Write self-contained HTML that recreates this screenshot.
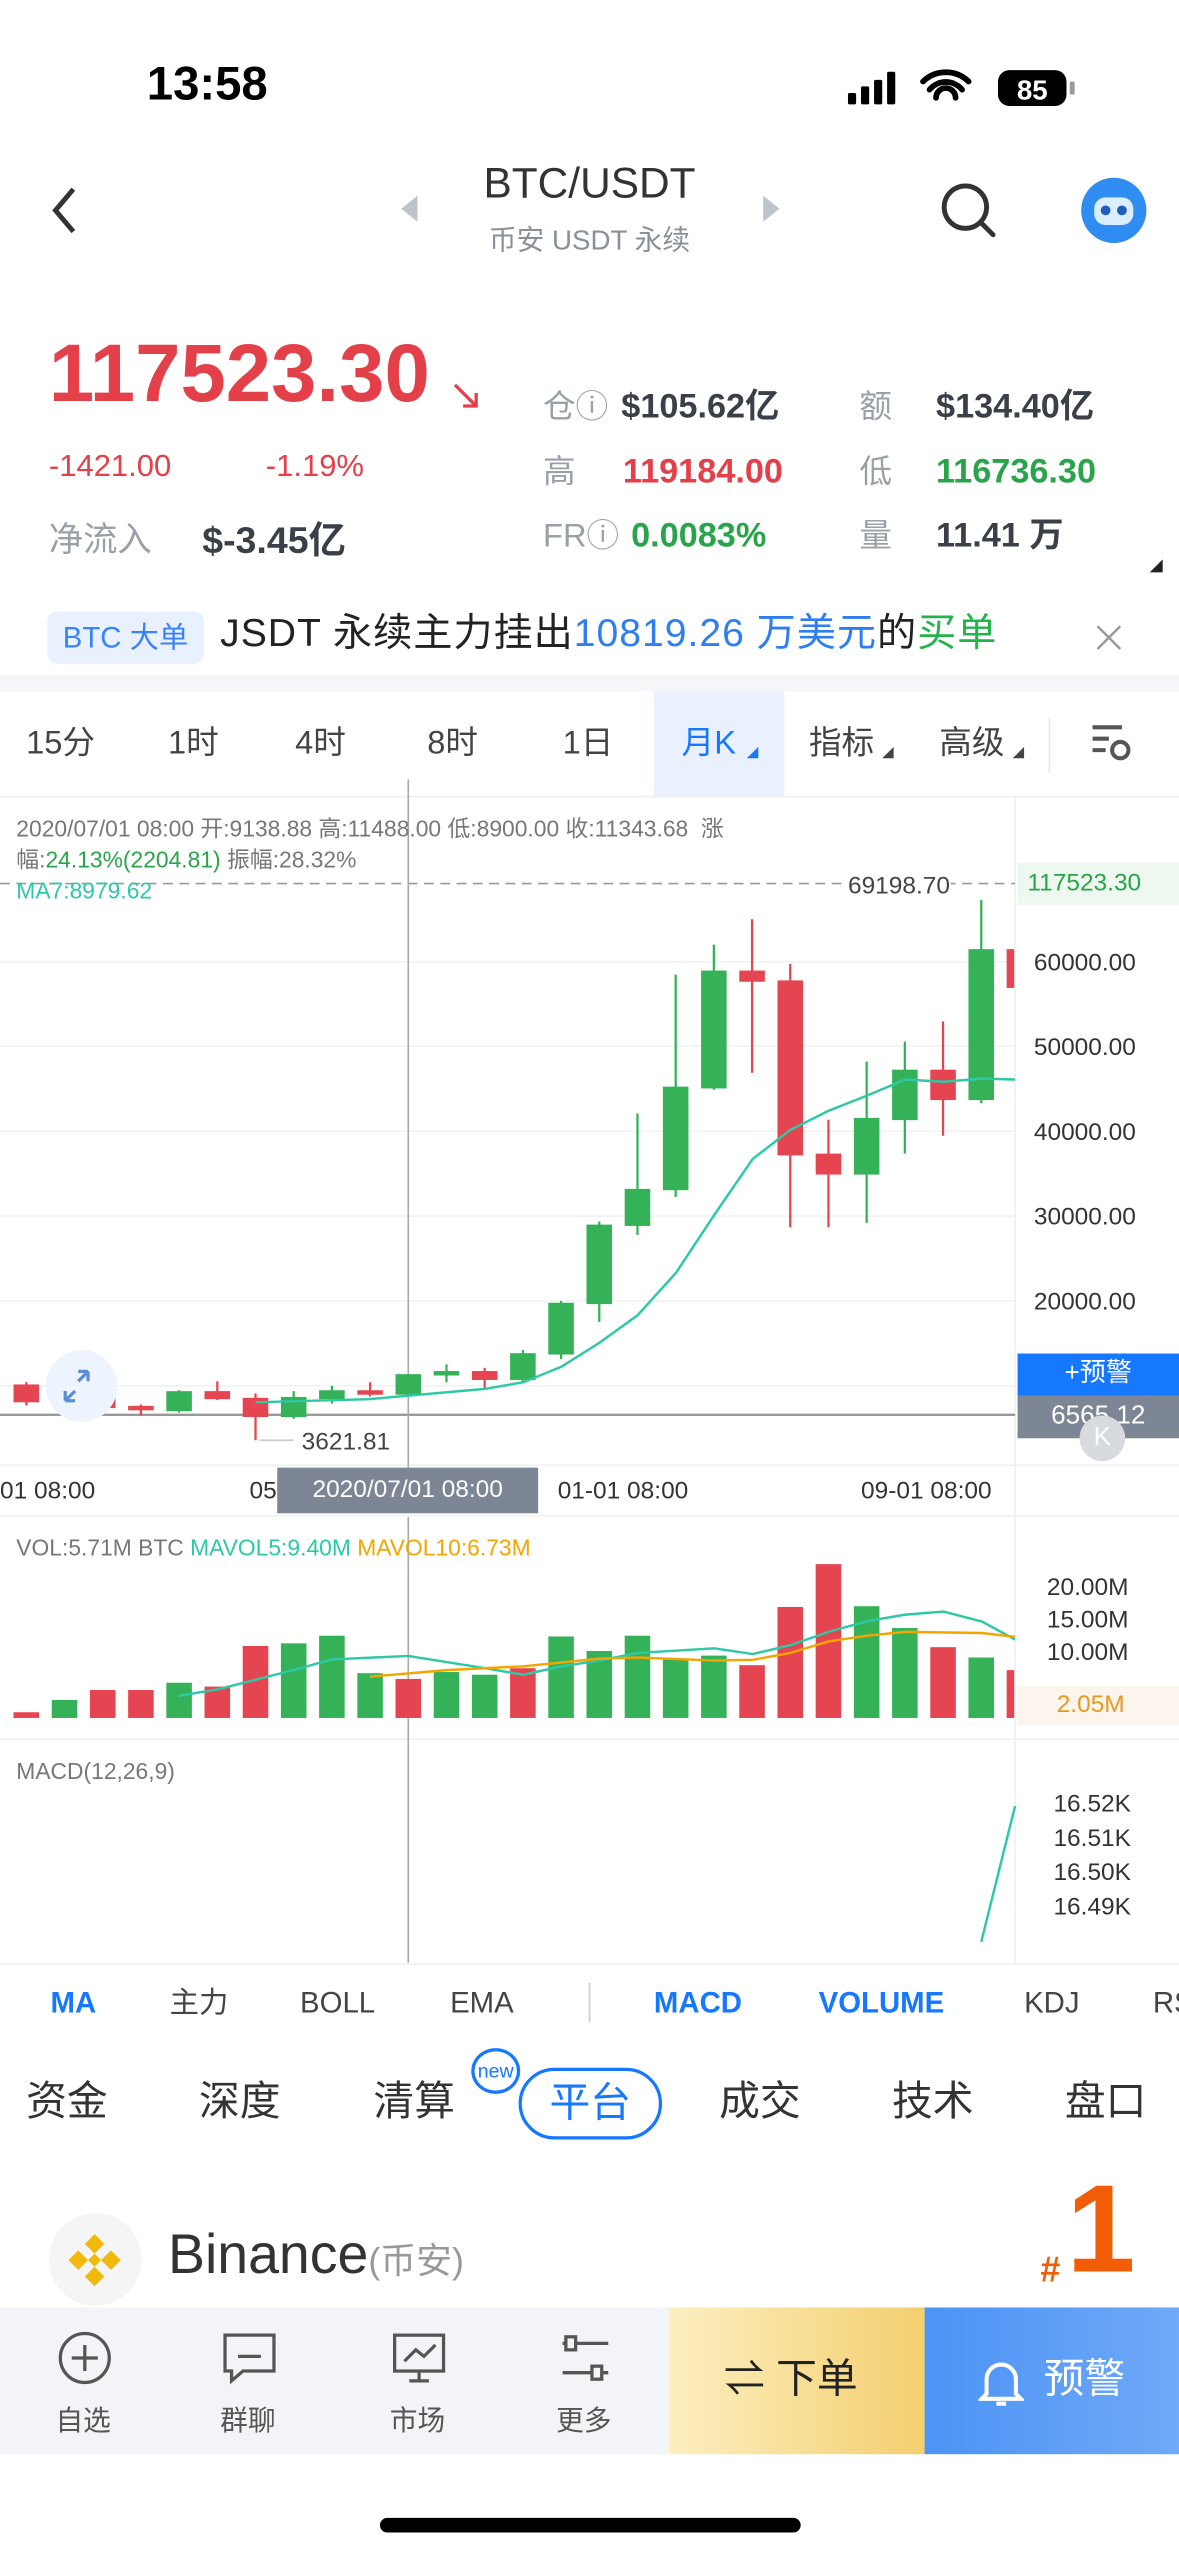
<!DOCTYPE html>
<html><head><meta charset="utf-8"><style>
*{margin:0;padding:0;box-sizing:border-box}
html,body{width:1179px;height:2556px;overflow:hidden;background:#fff}
#w{position:absolute;left:0;top:0;width:723px;height:1568px;transform:scale(1.63071);transform-origin:0 0;font-family:"Liberation Sans","Noto Sans CJK SC",sans-serif;color:#222}
.a{position:absolute;white-space:nowrap;line-height:1}
.g{color:#9aa0a8}.r{color:#e4404a}.gr{color:#2aa44a}.b{color:#1677ff}
.ax{position:absolute;left:634px;font-size:15px;color:#333;line-height:1}
</style></head><body><div id="w">
<!-- status -->
<div class="a" style="left:90px;top:38px;font-size:29px;font-weight:bold;color:#000">13:58</div>
<svg class="a" style="left:518px;top:42px" width="150" height="26" viewBox="0 0 150 26">
<rect x="2" y="15" width="5" height="7" rx="1" fill="#000"/><rect x="10" y="11" width="5" height="11" rx="1" fill="#000"/><rect x="18" y="7" width="5" height="15" rx="1" fill="#000"/><rect x="26" y="2" width="5" height="20" rx="1" fill="#000"/>
<path d="M48 8a20 20 0 0 1 28 0M52 13a13 13 0 0 1 20 0M56 18a6 6 0 0 1 12 0" stroke="#000" stroke-width="3.5" fill="none" stroke-linecap="round"/>
<rect x="94" y="1" width="42" height="22" rx="7" fill="#000"/><rect x="138" y="8" width="3" height="8" rx="1" fill="#999"/>
<text x="115" y="19" font-size="17" font-weight="bold" fill="#fff" text-anchor="middle" font-family="Liberation Sans">85</text></svg>
<!-- nav -->
<svg class="a" style="left:30px;top:114px" width="20" height="30"><path d="M15 2L4 15l11 13" stroke="#333" stroke-width="3" fill="none"/></svg>
<div class="a" style="left:0;width:723px;text-align:center;top:99px;font-size:26px;color:#333">BTC/USDT</div>
<div class="a g" style="left:0;width:723px;text-align:center;top:139px;font-size:17px;color:#8a9099">币安 USDT 永续</div>
<svg class="a" style="left:244px;top:119px" width="14" height="18"><path d="M12 1L2 9l10 8z" fill="#bfc4cb"/></svg>
<svg class="a" style="left:466px;top:119px" width="14" height="18"><path d="M2 1l10 8-10 8z" fill="#bfc4cb"/></svg>
<svg class="a" style="left:575px;top:110px" width="38" height="38"><circle cx="17" cy="17" r="13" stroke="#333" stroke-width="3" fill="none"/><path d="M27 27l7 7" stroke="#333" stroke-width="3" stroke-linecap="round"/></svg>
<svg class="a" style="left:662px;top:108px" width="42" height="42"><circle cx="21" cy="21" r="20" fill="#2f8cf0"/><rect x="9" y="13" width="24" height="17" rx="7" fill="#dbeeff"/><circle cx="16" cy="21" r="3" fill="#1f5fb5"/><circle cx="26" cy="21" r="3" fill="#1f5fb5"/></svg>
<!-- price -->
<div class="a r" style="left:30px;top:204px;font-size:50px;font-weight:bold">117523.30</div>
<svg class="a" style="left:276px;top:233px" width="20" height="20"><path d="M3 3l13 13M8 16h8V8" stroke="#e4404a" stroke-width="2" fill="none"/></svg>
<div class="a r" style="left:30px;top:277px;font-size:19px">-1421.00</div>
<div class="a r" style="left:163px;top:277px;font-size:19px">-1.19%</div>
<div class="a g" style="left:30px;top:321px;font-size:21px">净流入</div>
<div class="a" style="left:124px;top:320px;font-size:23px;font-weight:bold;color:#3a3f48">$-3.45亿</div>
<div class="a g" style="left:333px;top:240px;font-size:20px">仓ⓘ</div>
<div class="a" style="left:381px;top:239px;font-size:21px;font-weight:bold;color:#3a3f48">$105.62亿</div>
<div class="a g" style="left:527px;top:240px;font-size:20px">额</div>
<div class="a" style="left:574px;top:239px;font-size:21px;font-weight:bold;color:#3a3f48">$134.40亿</div>
<div class="a g" style="left:333px;top:280px;font-size:20px">高</div>
<div class="a r" style="left:382px;top:279px;font-size:21px;font-weight:bold">119184.00</div>
<div class="a g" style="left:527px;top:280px;font-size:20px">低</div>
<div class="a gr" style="left:574px;top:279px;font-size:21px;font-weight:bold">116736.30</div>
<div class="a g" style="left:333px;top:319px;font-size:20px">FRⓘ</div>
<div class="a gr" style="left:387px;top:318px;font-size:21px;font-weight:bold">0.0083%</div>
<div class="a g" style="left:527px;top:319px;font-size:20px">量</div>
<div class="a" style="left:574px;top:318px;font-size:21px;font-weight:bold;color:#3a3f48">11.41 万</div>
<svg class="a" style="left:704px;top:342px" width="10" height="10"><path d="M9 1v8H1z" fill="#222"/></svg>
<!-- banner -->
<div class="a b" style="left:29px;top:375px;width:96px;height:32px;background:#e8f1fd;border-radius:6px;font-size:18px;text-align:center;line-height:32px;color:#3b82f6">BTC 大单</div>
<div class="a" style="left:135px;top:377px;font-size:24px;color:#222;letter-spacing:0.6px">JSDT 永续主力挂出<span style="color:#2f7ef0">10819.26 万美元</span>的<span style="color:#22b34a">买单</span></div>
<svg class="a" style="left:671px;top:382px" width="18" height="18"><path d="M2 2l14 14M16 2L2 16" stroke="#999" stroke-width="1.5"/></svg>
<div class="a" style="left:0;top:414px;width:723px;height:10px;background:#f5f6f8"></div>
<!-- tabs -->
<div class="a" style="left:401px;top:424px;width:80px;height:64px;background:#e8f1fd"></div>
<div class="a" style="left:16px;top:446px;font-size:20px;color:#444">15分</div>
<div class="a" style="left:103px;top:446px;font-size:20px;color:#444">1时</div>
<div class="a" style="left:181px;top:446px;font-size:20px;color:#444">4时</div>
<div class="a" style="left:262px;top:446px;font-size:20px;color:#444">8时</div>
<div class="a" style="left:345px;top:446px;font-size:20px;color:#444">1日</div>
<div class="a b" style="left:418px;top:446px;font-size:20px">月K</div>
<svg class="a" style="left:458px;top:458px" width="8" height="8"><path d="M7 0v7H0z" fill="#1677ff"/></svg>
<div class="a" style="left:496px;top:446px;font-size:20px;color:#444">指标</div>
<svg class="a" style="left:541px;top:458px" width="8" height="8"><path d="M7 0v7H0z" fill="#444"/></svg>
<div class="a" style="left:576px;top:446px;font-size:20px;color:#444">高级</div>
<svg class="a" style="left:621px;top:458px" width="8" height="8"><path d="M7 0v7H0z" fill="#444"/></svg>
<div class="a" style="left:643px;top:440px;width:1px;height:34px;background:#e6e8eb"></div>
<svg class="a" style="left:668px;top:442px" width="28" height="28"><path d="M2 4h18M2 11h10M2 18h8" stroke="#555" stroke-width="2.5"/><circle cx="19" cy="18" r="5" stroke="#555" stroke-width="2.5" fill="none"/></svg>
<!-- chart area -->
<div class="a" style="left:0;top:488px;width:723px;height:1px;background:#eef0f3"></div>
<div class="a" style="left:622px;top:488px;width:1px;height:716px;background:#eef0f3"></div>
<div class="a" style="left:0;top:898px;width:723px;height:1px;background:#eef0f3"></div>
<div class="a" style="left:0;top:929px;width:723px;height:1px;background:#eef0f3"></div>
<div class="a" style="left:0;top:1066px;width:723px;height:1px;background:#eef0f3"></div>
<div class="a" style="left:0;top:1204px;width:723px;height:1px;background:#eef0f3"></div>
<svg class="a" style="left:0;top:478.3px" width="723" height="429.3" viewBox="0 0 1568 1568" preserveAspectRatio="none">
<g stroke="#f0f2f5" stroke-width="1" vector-effect="non-scaling-stroke">
<path d="M0 408H1350M0 597H1350M0 788H1350M0 978H1350M0 1168H1350M0 1358H1350" vector-effect="non-scaling-stroke"/></g>
<path d="M0 233H1350" stroke="#999" stroke-dasharray="6 4" vector-effect="non-scaling-stroke"/>
<path d="M0 1423H1350" stroke="#999" stroke-width="1.5" vector-effect="non-scaling-stroke"/>
<path d="M543 0V1568" stroke="#aaa" vector-effect="non-scaling-stroke"/>
<g id="c"></g>
<polyline points="340,1395 490,1388 645,1365 696,1350 747,1315 797,1262 848,1200 899,1105 950,975 1001,850 1051,785 1102,742 1153,708 1204,672 1255,677 1306,670 1350,672" fill="none" stroke="#2dc9a6" stroke-width="1.5" vector-effect="non-scaling-stroke"/>
<path d="M345 1480H390" stroke="#ccc" vector-effect="non-scaling-stroke"/>
</svg>
<div class="a" style="left:10px;top:499px;font-size:14px;color:#777;line-height:19px;white-space:normal;width:580px">2020/07/01 08:00 开:9138.88 高:11488.00 低:8900.00 收:11343.68 &nbsp;涨<br>幅:<span style="color:#2aa44a">24.13%(2204.81)</span> 振幅:28.32%</div>
<div class="a" style="left:10px;top:539px;font-size:14px;color:#2dc9a6">MA7:8979.62</div>
<div class="a" style="left:520px;top:536px;font-size:15px;color:#444;background:#fff">69198.70</div>
<div class="a" style="left:624px;top:529px;width:99px;height:26px;background:#eef8f0;color:#2aa44a;font-size:15px;line-height:26px;padding-left:6px">117523.30</div>
<div class="ax" style="top:583px">60000.00</div>
<div class="ax" style="top:635px">50000.00</div>
<div class="ax" style="top:687px">40000.00</div>
<div class="ax" style="top:739px">30000.00</div>
<div class="ax" style="top:791px">20000.00</div>
<div class="a" style="left:624px;top:830px;width:99px;height:26px;background:#1677ff;color:#fff;font-size:16px;text-align:center;line-height:26px">+预警</div>
<div class="a" style="left:624px;top:856px;width:99px;height:26px;background:#7d8694;color:#fff;font-size:16px;text-align:center;line-height:26px">6565.12</div>
<div class="a" style="left:662px;top:868px;width:28px;height:28px;border-radius:50%;background:#d7dadf;color:#fff;font-size:16px;text-align:center;line-height:28px">K</div>
<div class="a" style="left:28px;top:828px;width:44px;height:44px;border-radius:50%;background:#eef4fd"></div>
<svg class="a" style="left:32px;top:835px" width="30" height="30"><path d="M8 24L14 18M8 24v-6M8 24h6M22 6l-6 6M22 6v6M22 6h-6" stroke="#5b8ddb" stroke-width="2" fill="none"/></svg>
<div class="a" style="left:185px;top:877px;font-size:15px;color:#444">3621.81</div>
<!-- x axis -->
<div class="a" style="left:0;top:907px;font-size:15px;color:#333">01 08:00</div>
<div class="a" style="left:153px;top:907px;font-size:15px;color:#333">05</div>
<div class="a" style="left:170px;top:900px;width:160px;height:28px;background:#7d8694;color:#fff;font-size:15px;text-align:center;line-height:28px">2020/07/01 08:00</div>
<div class="a" style="left:342px;top:907px;font-size:15px;color:#333">01-01 08:00</div>
<div class="a" style="left:528px;top:907px;font-size:15px;color:#333">09-01 08:00</div>
<!-- vol -->
<svg class="a" style="left:0;top:907.6px" width="723" height="368" viewBox="0 0 1568 1568" preserveAspectRatio="none">
<path d="M543 95V1260" stroke="#aaa" vector-effect="non-scaling-stroke"/>
<g id="v"></g>
<polyline points="238,562 290,545 390,495 441,467 543,458 645,490 696,507 747,485 797,470 848,450 950,438 1001,453 1051,430 1102,395 1153,367 1204,350 1255,342 1306,368 1350,415" fill="none" stroke="#2dc9a6" stroke-width="1.5" vector-effect="non-scaling-stroke"/>
<polyline points="492,512 594,495 696,485 797,465 848,462 950,470 1001,468 1051,450 1102,420 1153,405 1204,395 1306,398 1350,408" fill="none" stroke="#f5a500" stroke-width="1.5" vector-effect="non-scaling-stroke"/>
<path d="M1305 1205L1350 850" stroke="#2dc9a6" stroke-width="1.5" vector-effect="non-scaling-stroke"/>
</svg>
<div class="a" style="left:10px;top:942px;font-size:14px;color:#777">VOL:5.71M BTC <span style="color:#2dc9a6">MAVOL5:9.40M</span> <span style="color:#f5a500">MAVOL10:6.73M</span></div>
<div class="ax" style="top:966px;left:642px">20.00M</div>
<div class="ax" style="top:986px;left:642px">15.00M</div>
<div class="ax" style="top:1006px;left:642px">10.00M</div>
<div class="a" style="left:624px;top:1034px;width:99px;height:24px;background:#fbf5ee;color:#e69a20;font-size:15px;line-height:24px;padding-left:24px">2.05M</div>
<div class="a" style="left:10px;top:1079px;font-size:14px;color:#777">MACD(12,26,9)</div>
<div class="ax" style="top:1099px;left:646px">16.52K</div>
<div class="ax" style="top:1120px;left:646px">16.51K</div>
<div class="ax" style="top:1141px;left:646px">16.50K</div>
<div class="ax" style="top:1162px;left:646px">16.49K</div>
<!-- indicators -->
<div class="a b" style="left:31px;top:1219px;font-size:18px;font-weight:bold">MA</div>
<div class="a" style="left:104px;top:1219px;font-size:18px;color:#444">主力</div>
<div class="a" style="left:184px;top:1219px;font-size:18px;color:#444">BOLL</div>
<div class="a" style="left:276px;top:1219px;font-size:18px;color:#444">EMA</div>
<div class="a" style="left:361px;top:1216px;width:1px;height:24px;background:#ccc"></div>
<div class="a b" style="left:401px;top:1219px;font-size:18px;font-weight:bold">MACD</div>
<div class="a b" style="left:502px;top:1219px;font-size:18px;font-weight:bold">VOLUME</div>
<div class="a" style="left:628px;top:1219px;font-size:18px;color:#444">KDJ</div>
<div class="a" style="left:707px;top:1219px;font-size:18px;color:#444">RS</div>
<!-- tabs 2 -->
<div class="a" style="left:16px;top:1277px;font-size:25px;color:#333">资金</div>
<div class="a" style="left:122px;top:1277px;font-size:25px;color:#333">深度</div>
<div class="a" style="left:229px;top:1277px;font-size:25px;color:#333">清算</div>
<div class="a" style="left:289px;top:1256px;width:30px;height:28px;border:2px solid #1677ff;border-radius:50%;background:#fff;color:#1677ff;font-size:12px;text-align:center;line-height:24px">new</div>
<div class="a b" style="left:318px;top:1268px;width:88px;height:44px;border:2px solid #1677ff;border-radius:22px;font-size:25px;text-align:center;line-height:40px">平台</div>
<div class="a" style="left:441px;top:1277px;font-size:25px;color:#333">成交</div>
<div class="a" style="left:547px;top:1277px;font-size:25px;color:#333">技术</div>
<div class="a" style="left:653px;top:1277px;font-size:25px;color:#333">盘口</div>
<!-- binance -->
<div class="a" style="left:30px;top:1357px;width:57px;height:57px;border-radius:50%;background:#f5f5f5"></div>
<svg class="a" style="left:38px;top:1366px" width="40" height="40" viewBox="0 0 40 40"><g fill="#f0b90b"><path d="M20 4l6 6-6 6-6-6zM20 24l6 6-6 6-6-6zM10 14l6 6-6 6-6-6zM30 14l6 6-6 6-6-6zM20 16l4 4-4 4-4-4z"/></g></svg>
<div class="a" style="left:103px;top:1366px;font-size:34px;color:#333">Binance<span style="font-size:22px;color:#999">(币安)</span></div>
<div class="a" style="left:638px;top:1381px;font-size:22px;color:#f25c05;font-weight:bold">#</div>
<div class="a" style="left:654px;top:1330px;font-size:76px;color:#f25c05;font-weight:bold">1</div>
<!-- bottom bar -->
<div class="a" style="left:0;top:1415px;width:410px;height:90px;background:#f2f4f7"></div>
<div class="a" style="left:410px;top:1415px;width:157px;height:90px;background:linear-gradient(90deg,#fdefc2,#f3cf6e)"></div>
<div class="a" style="left:567px;top:1415px;width:156px;height:90px;background:linear-gradient(90deg,#4b93f5,#6fa9f7)"></div>
<svg class="a" style="left:34px;top:1428px" width="36" height="36"><circle cx="18" cy="18" r="15" stroke="#555" stroke-width="2" fill="none"/><path d="M18 10v16M10 18h16" stroke="#555" stroke-width="2"/></svg>
<svg class="a" style="left:135px;top:1428px" width="36" height="36"><path d="M3 4h30v22H14l-7 6v-6H3z" stroke="#555" stroke-width="2" fill="none"/><path d="M11 17h14" stroke="#555" stroke-width="2"/></svg>
<svg class="a" style="left:239px;top:1428px" width="36" height="36"><rect x="3" y="4" width="30" height="22" stroke="#555" stroke-width="2" fill="none"/><path d="M9 20l7-7 5 4 7-7M12 32h12M18 26v6" stroke="#555" stroke-width="2" fill="none"/></svg>
<svg class="a" style="left:341px;top:1428px" width="36" height="36"><path d="M4 9h28M4 27h28" stroke="#555" stroke-width="2"/><rect x="6" y="5" width="6" height="8" fill="#f2f4f7" stroke="#555" stroke-width="2"/><rect x="22" y="23" width="6" height="8" fill="#f2f4f7" stroke="#555" stroke-width="2"/></svg>
<div class="a" style="left:34px;top:1476px;font-size:17px;color:#555">自选</div>
<div class="a" style="left:135px;top:1476px;font-size:17px;color:#555">群聊</div>
<div class="a" style="left:239px;top:1476px;font-size:17px;color:#555">市场</div>
<div class="a" style="left:341px;top:1476px;font-size:17px;color:#555">更多</div>
<div class="a" style="left:444px;top:1447px;font-size:25px;color:#222">⇌ 下单</div>
<svg class="a" style="left:600px;top:1446px" width="28" height="30"><path d="M5 22V13a9 9 0 0 1 18 0v9l3 3H2z" stroke="#fff" stroke-width="2.5" fill="none"/><path d="M11 28h6" stroke="#fff" stroke-width="2.5"/></svg>
<div class="a" style="left:640px;top:1447px;font-size:25px;color:#fff">预警</div>
<div class="a" style="left:233px;top:1544px;width:258px;height:9px;border-radius:5px;background:#000"></div>
</div>
<script>
var C=[["r",1355,1395,1350,1402],["g",1375,1393,1350,1410],["r",1373,1408,1365,1420],["r",1403,1413,1400,1425],["g",1370,1415,1368,1418],["r",1370,1388,1348,1390],["r",1385,1428,1375,1480],["g",1383,1428,1370,1432],["g",1368,1388,1358,1398],["r",1368,1378,1350,1382],["g",1332,1378,1332,1378],["g",1325,1335,1310,1350],["r",1325,1345,1318,1365],["g",1285,1345,1278,1352],["g",1172,1288,1168,1298],["g",997,1175,990,1215],["g",917,1000,748,1020],["g",688,920,437,935],["g",428,692,370,695],["r",428,453,313,657],["r",450,842,413,1003],["r",838,885,762,1003],["g",758,885,632,993],["g",650,763,587,838],["r",650,718,542,798],["g",380,718,270,725],["r",380,467,380,467]];
var V=[605,573,547,547,528,538,432,425,405,503,518,500,507,490,407,445,405,465,457,482,330,218,328,385,435,462,495];
var VC="rgrrgrrgggrggrgggggrrrggrgr";
var s="",t="";
for(var i=0;i<C.length;i++){var c=C[i],x=35+i*50.8,col=c[0]=="r"?"#e54550":"#35b257",w=i==26?10:34;
s+='<rect x="'+(x-17)+'" y="'+c[1]+'" width="'+w+'" height="'+Math.max(c[2]-c[1],6)+'" fill="'+col+'"/>';
if(i<26)s+='<rect x="'+(x-1.5)+'" y="'+c[3]+'" width="3" height="'+(c[4]-c[3])+'" fill="'+col+'"/>';
var vc=VC[i]=="r"?"#e54550":"#35b257";
t+='<rect x="'+(x-17)+'" y="'+V[i]+'" width="'+w+'" height="'+(620-V[i])+'" fill="'+vc+'"/>';}
document.getElementById("c").innerHTML=s;document.getElementById("v").innerHTML=t;
</script>
</body></html>
